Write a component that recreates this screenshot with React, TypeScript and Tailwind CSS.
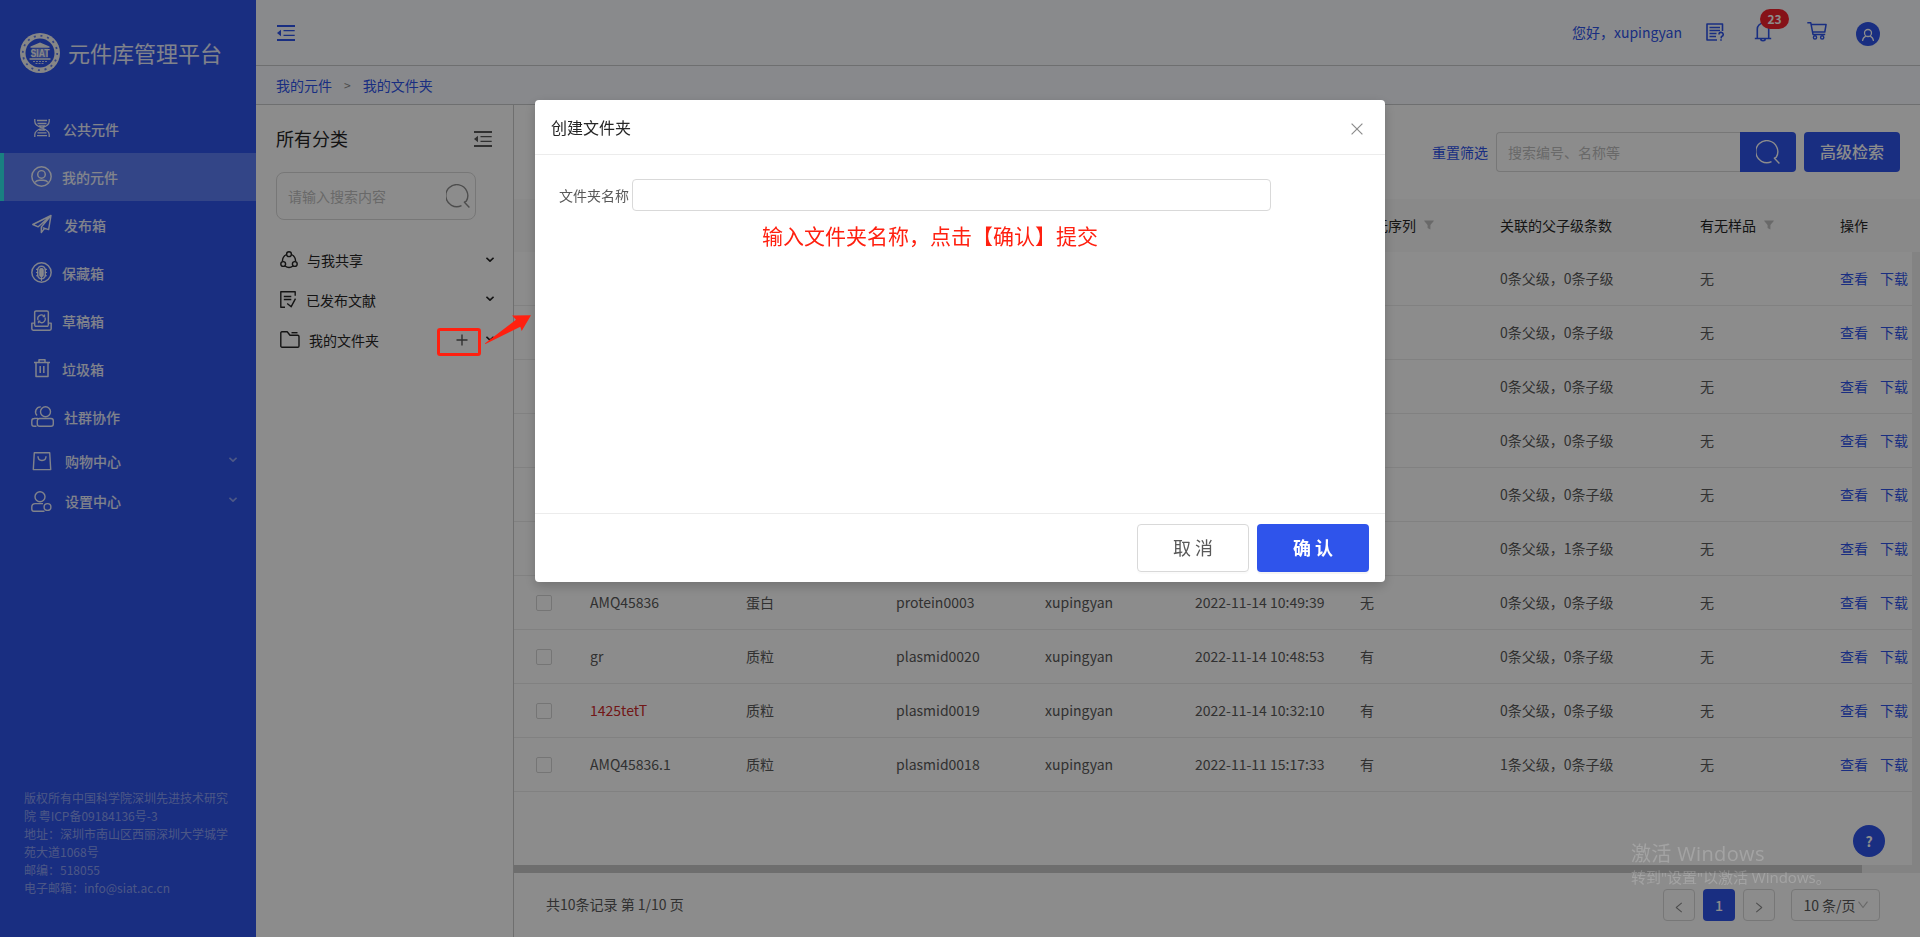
import React from "react";

type P = { children?: React.ReactNode; className?: string; box?: string };

function Svg({ children, className = "", box = "0 0 20 20" }: P) {
  return (
    <svg viewBox={box} className={"shrink-0 " + className} fill="none" stroke="currentColor" strokeWidth="1.4" strokeLinejoin="round">
      {children}
    </svg>
  );
}

const Outdent = () => (
  <Svg box="0 0 18 16" className="block h-4 w-[18px]">
    <path d="M0 1h18M0 15h18" strokeWidth="1.8" />
    <path d="M6.5 5.6h11.2M6.5 10.4h11.2" strokeWidth="1.3" />
    <path d="M0 8l4-3.2v6.4z" fill="currentColor" stroke="none" />
  </Svg>
);

const Search = () => (
  <Svg box="0 0 24 24" className="block size-6">
    <path d="M15.500 21.600A11 11 0 1 1 20.300 17.200L18.400 18.200l5 5.200" />
  </Svg>
);

const Chevron = ({ className = "" }: { className?: string }) => (
  <Svg box="0 0 8 6" className={"block h-[6px] w-2 " + className}>
    <path d="M.4 .8L4 4.2 7.6 .8" strokeWidth="1.7" />
  </Svg>
);

const Funnel = () => (
  <svg viewBox="0 0 10 10" className="ml-2 h-[10px] w-[10px] text-[#bfbfbf]" fill="currentColor">
    <path d="M.5 .5h9c.4 0 .5.3.3.6L6.4 5v4.5L3.6 8V5L.2 1.1C0 .8.1.5.5.5z" />
  </svg>
);

const icons: Record<string, React.ReactNode> = {
  dna: (
    <Svg box="0 0 16 18" className="h-[18px] w-4">
      <path d="M.8 0v2.500C.8 6 4 7.500 8 9s7.200 3 7.200 6.500V18M15.200 0v2.500C15.200 6 12 7.500 8 9S.8 12 .8 15.500V18M3 1.500h10M3.500 4.500h9M5 7h6M5 11h6M3.500 13.800h9M3 16.600h10" strokeWidth="1.300" />
    </Svg>
  ),
  user: (
    <Svg className="h-[21px] w-[21px]">
      <circle cx="10" cy="10" r="9.2" />
      <circle cx="10" cy="8" r="3.6" />
      <path d="M3.700 15.600c1.300-1.600 3-2.100 4.500-2.100h3.600c1.500 0 3.200.5 4.500 2.100" />
    </Svg>
  ),
  plane: (
    <Svg className="h-5 w-5">
      <path d="M19 1.500L.8 10.500l5.400 2.300L19 1.500zM19 1.500L16.600 15.600l-6-2M19 1.500L9.300 13v5.500l3.200-4.100" />
    </Svg>
  ),
  vault: (
    <Svg className="h-[21px] w-[21px]">
      <circle cx="10" cy="10" r="9.200" />
      <rect x="6.400" y="4" width="7.200" height="12" rx="3.600" />
      <rect x="8.500" y="6.300" width="3" height="7.400" rx="1" fill="currentColor" />
      <path d="M10 14v4M4.800 7h2M4.800 10h2M4.800 13h2M13.200 7h2M13.200 10h2M13.200 13h2" strokeWidth="1" />
    </Svg>
  ),
  draft: (
    <Svg className="h-[21px] w-[21px]">
      <path d="M3.500 15V2.200c0-.8.500-1.300 1.300-1.300h10.400c.8 0 1.300.5 1.300 1.300V15M3.500 12.500H.8v5.400c0 .7.500 1.300 1.300 1.300h15.800c.8 0 1.300-.6 1.300-1.300v-5.400h-2.700M3.500 15.500h13" />
      <path d="M6.700 9.600a3.500 3.500 0 0 1 5.400-4.100M13.300 7.200a3.500 3.500 0 0 1-5.400 4.100M12.900 4.200v2h-1.800M7.100 12.600v-2h1.800" strokeWidth="1.200" />
    </Svg>
  ),
  trash: (
    <Svg className="h-5 w-5">
      <path d="M2 4.500h16M4 4.500v14h12v-14M7 4V1.800h6V4M8.200 8v7M11.800 8v7" strokeWidth="1.500" />
    </Svg>
  ),
  group: (
    <Svg box="0 0 23 21" className="h-[21px] w-[23px]">
      <circle cx="14.500" cy="5.800" r="5" />
      <path d="M9.800 .9a5 5 0 0 0-3.800 8.500M4.500 12.500H3.300C1.800 12.500.8 13.500.8 15v3c0 1.200.8 2.200 2.200 2.200h2.500M3 12.400h4" />
      <rect x="6.300" y="12.500" width="16" height="7.700" rx="2.300" />
    </Svg>
  ),
  bag: (
    <Svg className="h-5 w-5">
      <path d="M2.300 1.800h15.400l1 16.800H1.300z M6 5.300c0 5.600 8 5.600 8 0" />
    </Svg>
  ),
  setting: (
    <Svg box="0 0 21 21" className="h-[21px] w-[21px]">
      <circle cx="9" cy="5.800" r="5" />
      <path d="M12 12.600H4.200C2 12.600.8 14 .8 16v2c0 1.300.8 2.200 2 2.200h10.700" />
      <circle cx="16.500" cy="16" r="3.400" />
    </Svg>
  ),
};

const menu = [
  { icon: "dna", label: "公共元件", pad: "pl-[11px]", h: "h-12" },
  { icon: "user", label: "我的元件", pad: "pl-[10px]", h: "h-12", active: true },
  { icon: "plane", label: "发布箱", pad: "pl-3", h: "h-12" },
  { icon: "vault", label: "保藏箱", pad: "pl-[10px]", h: "h-12" },
  { icon: "draft", label: "草稿箱", pad: "pl-[10px]", h: "h-12" },
  { icon: "trash", label: "垃圾箱", pad: "pl-[10px]", h: "h-12" },
  { icon: "group", label: "社群协作", pad: "pl-[10px]", h: "h-12" },
  { icon: "bag", label: "购物中心", pad: "pl-[13px]", h: "h-10", sub: true },
  { icon: "setting", label: "设置中心", pad: "pl-[13px]", h: "h-10", sub: true },
];

function Logo() {
  return (
    <svg viewBox="0 0 40 40" className="size-10 shrink-0">
      <circle cx="20" cy="20" r="20" fill="#f5f5f5" />
      <circle cx="20" cy="20" r="17.200" fill="none" stroke="#2f54eb" strokeWidth="1.800" strokeDasharray="2 4.750" opacity=".75" />
      <circle cx="20" cy="20" r="14.500" fill="#2f54eb" />
      <path d="M10.500 13.500L20 9.500l9.500 4v1.200h-19zM9.500 25.200h21v1.600h-21z" fill="#f5f5f5" />
      <path d="M12 15.500h16v9H12z" fill="#f5f5f5" opacity=".35" />
      <text x="20" y="24" textAnchor="middle" fontSize="10" fontWeight="900" textLength="19" lengthAdjust="spacingAndGlyphs" fill="#f5f5f5" fontFamily="Liberation Sans, sans-serif">SIAT</text>
      <path d="M13 28.500h14M15.500 30.500h9" stroke="#f5f5f5" strokeWidth=".8" strokeDasharray="2 1" />
    </svg>
  );
}

function Sidebar() {
  return (
    <aside className="flex w-64 shrink-0 flex-col bg-[#2f54eb] text-white/90">
      <div className="flex h-[105px] items-start gap-2 pl-5 pt-[33px]">
        <Logo />
        <span className="text-[22px] leading-[39px]">元件库管理平台</span>
      </div>
      <nav>
        {menu.map((m) => (
          <div key={m.label} className={`flex items-center text-sm font-medium ${m.h} ${m.active ? "border-l-4 border-[#2fe9ec] bg-[#5d7ef6] pl-[27px]" : "pl-[31px]"}`}>
            <span className={`flex ${m.icon === "group" ? "w-[23px]" : "w-[21px]"} justify-center ${m.icon === "dna" || m.icon === "plane" ? "-translate-y-px" : m.sub ? "" : "-translate-y-px"}`}>{icons[m.icon]}</span>
            <span className={m.pad}>{m.label}</span>
            {m.sub && <Chevron className="ml-auto mr-[19px] -translate-y-px opacity-50" />}
          </div>
        ))}
      </nav>
      <div className="mt-auto whitespace-nowrap pb-10 pl-6 text-xs leading-[18px] text-white/45">
        版权所有中国科学院深圳先进技术研究<br />院 粤ICP备09184136号-3<br />地址：深圳市南山区西丽深圳大学城学<br />苑大道1068号<br />邮编：518055<br />电子邮箱：info@siat.ac.cn
      </div>
    </aside>
  );
}

function Header() {
  return (
    <>
      <header className="flex h-[66px] items-start border-b border-[#c8cacc] bg-[#f9fcff] pl-[21px] pr-10 text-[#2f54eb]">
        <div className="pt-[25px]"><Outdent /></div>
        <span className="ml-auto pt-[21px] text-sm leading-[22px]">您好，xupingyan</span>
        <Svg box="0 0 18 18" className="ml-6 mt-[23px] size-[18px]">
          <path d="M11 17H1V1h15.500v7" strokeWidth="1.600" />
          <path d="M3.500 4.500h10.500M3.500 7.500h10.500M3.500 10.500h7M3.500 13.500h6.500" strokeWidth="1.400" />
          <path d="M13 11.500a2.100 2.100 0 1 1 2.500 2l-.4 1.800M15 16.300v1.500" strokeWidth="1.600" />
        </Svg>
        <div className="relative ml-[30px] mt-[22px]">
          <Svg box="0 0 18 20" className="block h-5 w-[18px]">
            <path d="M3.300 16.200V7a5.700 5.700 0 0 1 11.400 0v9.200M.8 16.500h16.400M6.800 17c0 2.300 4.400 2.300 4.400 0" strokeWidth="1.600" />
          </Svg>
          <span className="absolute -top-[13px] left-[6px] flex h-5 w-[29px] items-center justify-center rounded-full bg-[#f5222d] text-xs font-bold text-white">23</span>
        </div>
        <Svg box="0 0 20 18" className="ml-[35px] mt-[22px] h-[18px] w-5">
          <path d="M.3 .8h3.500l2.200 11.600h12.200M4.300 2.400h14.800l-1.300 7.600H5.500" strokeWidth="1.500" />
          <circle cx="8" cy="15.400" r="1.600" />
          <circle cx="15.200" cy="15.400" r="1.600" />
        </Svg>
        <div className="ml-[29px] mt-[22px] flex size-6 items-center justify-center rounded-full bg-[#2f54eb] text-white">
          <Svg box="0 0 14 14" className="mt-0.5 size-[14px]">
            <circle cx="7" cy="5" r="3.500" strokeWidth="1.300" />
            <path d="M1.500 13c.3-2.500 1.800-4.200 3.300-4.900M12.500 13c-.3-2.500-1.800-4.200-3.300-4.900" strokeWidth="1.200" />
          </Svg>
        </div>
      </header>
      <div className="flex h-[39px] items-center border-b border-[#c8cacc] bg-[#f8faff] pl-5 text-sm text-[#2f54eb]">
        我的元件<span className="mx-3 text-xs text-[#8c8c8c]">&gt;</span>我的文件夹
      </div>
    </>
  );
}

function Categories() {
  return (
    <section className="w-[258px] shrink-0 border-r border-[#cacaca] text-[#262626]">
      <div className="flex items-start pl-5 pr-[21px] pt-5">
        <h2 className="-mt-px text-lg leading-7">所有分类</h2>
        <div className="ml-auto pt-1.5 text-[#595959]"><Outdent /></div>
      </div>
      <div className="ml-5 mt-5 flex h-12 w-[200px] items-center rounded-lg border border-[#d9d9d9] pl-[11px] pr-[5px] text-sm text-[#bfbfbf]">
        请输入搜索内容
        <span className="ml-auto text-[#8c8c8c]"><Search /></span>
      </div>
      <div className="mt-5 pl-6 text-sm">
        <div className="flex h-10 items-center pr-[19px]">
          <Svg box="0 0 18 18" className="h-[18px] w-[18px]">
            <circle cx="9" cy="3.200" r="2.400" /><circle cx="3.200" cy="13" r="2.400" /><circle cx="14.800" cy="13" r="2.400" />
            <path d="M6.500 3.500C3.700 5 2.300 7.500 2.500 10.500M11.500 3.500c2.800 1.500 4.200 4 4 7M5 15c2.500 1.800 5.500 1.800 8 0" />
          </Svg>
          <span className="pl-[9px]">与我共享</span>
          <Chevron className="ml-auto" />
        </div>
        <div className="flex h-10 items-center pr-[19px]">
          <Svg box="0 0 17 17" className="h-[17px] w-[17px] -translate-y-px">
            <path d="M5 16.200H.8V.8h14.400v4M3.800 5.500h7.500M3.800 8.500h7.500M7.200 12.500l4 3.200 4.300-8" />
          </Svg>
          <span className="pl-[9px]">已发布文献</span>
          <Chevron className="ml-auto -translate-y-px" />
        </div>
        <div className="flex h-10 items-center pr-[19px]">
          <Svg box="0 0 20 17" className="h-[17px] w-5 -translate-y-px">
            <path d="M.8 2c0-.7.400-1.200 1.100-1.200h5.300l2.800 3.500h7.800c.7 0 1.200.4 1.200 1.100v9.600c0 .7-.5 1.200-1.200 1.200H2c-.7 0-1.200-.5-1.200-1.200z" />
            <path d="M11.500 1.700h6" />
          </Svg>
          <span className="pl-[9px]">我的文件夹</span>
          <Svg box="0 0 12 12" className="ml-auto mr-[18px] size-3 text-[#595959]">
            <path d="M6 .5v11M.5 6h11" />
          </Svg>
          <Chevron className="-translate-y-px" />
        </div>
      </div>
    </section>
  );
}

type Row = { name?: string; type?: string; code?: string; user?: string; time?: string; seq?: string; relation: string };
const none = "0条父级，0条子级";
const rows: Row[] = [
  { relation: none },
  { relation: none },
  { relation: none },
  { relation: none },
  { relation: none },
  { relation: "0条父级，1条子级" },
  { name: "AMQ45836", type: "蛋白", code: "protein0003", user: "xupingyan", time: "2022-11-14 10:49:39", seq: "无", relation: none },
  { name: "gr", type: "质粒", code: "plasmid0020", user: "xupingyan", time: "2022-11-14 10:48:53", seq: "有", relation: none },
  { name: "1425tetT", type: "质粒", code: "plasmid0019", user: "xupingyan", time: "2022-11-14 10:32:10", seq: "有", relation: none },
  { name: "AMQ45836.1", type: "质粒", code: "plasmid0018", user: "xupingyan", time: "2022-11-11 15:17:33", seq: "有", relation: "1条父级，0条子级" },
];

const cols = "grid grid-cols-[76px_156px_150px_149px_150px_165px_140px_200px_140px_1fr] items-center whitespace-nowrap pb-0.5 text-sm";
const check = "ml-[22px] size-4 translate-y-px rounded-[2px] border border-[#d6d6d6]";

function Table() {
  return (
    <>
      <div className={`${cols} h-[53px] shrink-0 bg-[#fafafa] text-[#262626]`}>
        <span className={check} />
        <span /><span /><span /><span /><span />
        <span className="flex items-center">有无序列<Funnel /></span>
        <span>关联的父子级条数</span>
        <span className="flex items-center">有无样品<Funnel /></span>
        <span>操作</span>
      </div>
      <div className="flex h-[613px] shrink-0">
        <div className="min-w-0 flex-1">
          {rows.map((r, i) => (
            <div key={i} className={`${cols} h-[54px] border-b border-[#ececec] text-[#595959]`}>
              <span className={check} />
              <span className={r.name === "1425tetT" ? "text-[#cf2a2a]" : ""}>{r.name}</span>
              <span>{r.type}</span>
              <span>{r.code}</span>
              <span>{r.user}</span>
              <span>{r.time}</span>
              <span>{r.seq}</span>
              <span>{r.relation}</span>
              <span>无</span>
              <span className="flex gap-3 text-[#2f54eb]"><a>查看</a><a>下载</a></span>
            </div>
          ))}
        </div>
        <div className="w-2 bg-[#efefef]" />
      </div>
      <div className="h-2 shrink-0 bg-[#efefef]"><div className="h-2 w-[1348px] bg-[#c9c9c9]" /></div>
    </>
  );
}

function Pager() {
  const b = "flex h-8 items-center justify-center rounded border border-[#d9d9d9]";
  return (
    <div className="flex items-center pl-8 pr-10 pt-4 text-sm text-[#595959]">
      <span className="-translate-y-px">共10条记录 第 1/10 页</span>
      <span className={`${b} ml-auto w-8 text-[#8c8c8c]`}>
        <Svg box="0 0 8 12" className="h-[11px] w-[8px] translate-y-0.5"><path d="M7 1L1 6l6 5" strokeWidth="1.100" /></Svg>
      </span>
      <span className="ml-2 flex size-8 items-center justify-center rounded bg-[#2f54eb] font-medium text-white">1</span>
      <span className={`${b} ml-2 w-8 text-[#8c8c8c]`}>
        <Svg box="0 0 8 12" className="h-[11px] w-[8px] translate-y-0.5"><path d="M1 1l6 5-6 5" strokeWidth="1.100" /></Svg>
      </span>
      <span className={`${b} ml-4 w-[89px] gap-[2px]`}>
        10 条/页
        <Svg box="0 0 10 8" className="h-2 w-[10px] text-[#bfbfbf]"><path d="M.5 .7L5 6.500 9.500 .7" strokeWidth="1.200" /></Svg>
      </span>
    </div>
  );
}

function Modal() {
  return (
    <div className="fixed inset-0 flex items-start justify-center bg-black/45 pt-[100px]">
      <div className="relative flex h-[482px] w-[850px] flex-col rounded bg-white shadow-[0_4px_12px_rgba(0,0,0,0.2)]">
        <div className="flex h-[55px] shrink-0 items-center border-b border-[#ececec] pl-4 pr-[22px] text-base text-[#262626]">
          创建文件夹
          <Svg box="0 0 12 12" className="ml-auto mt-1 size-3 text-[#8c8c8c]"><path d="M.6 .6l10.800 10.800M11.400 .6L.6 11.400" strokeWidth="1.200" /></Svg>
        </div>
        <div className="flex-1 pl-6 pt-6">
          <div className="flex items-center">
            <label className="w-[73px] text-sm text-[#595959]">文件夹名称</label>
            <input className="h-8 w-[639px] rounded border border-[#d9d9d9] bg-white" />
          </div>
          <p className="pl-[203px] pt-2 text-[21px] leading-8 text-[#ff2010]">输入文件夹名称，点击【确认】提交</p>
        </div>
        <div className="flex h-[69px] shrink-0 items-start justify-end gap-2 border-t border-[#ececec] pr-4 pt-[10px] text-lg">
          <button className="h-12 w-28 rounded border border-[#d9d9d9] pb-0.5 text-[#595959] shadow-[0_2px_0_rgba(0,0,0,0.015)]">取 消</button>
          <button className="h-12 w-28 rounded bg-[#2f54eb] pb-0.5 font-bold text-white shadow-[0_2px_0_rgba(0,0,0,0.045)]">确 认</button>
        </div>
      </div>
    </div>
  );
}

export default function App() {
  return (
    <div className="relative flex h-[937px] w-full overflow-hidden bg-white font-['Noto_Sans_CJK_SC',sans-serif]">
      <Sidebar />
      <div className="flex min-w-0 flex-1 flex-col">
        <Header />
        <div className="flex min-h-0 flex-1">
          <Categories />
          <main className="flex min-w-0 flex-1 flex-col">
            <div className="flex h-[94px] shrink-0 items-start justify-end pr-5 pt-[27px]">
              <span className="mr-2 text-sm leading-10 text-[#2f54eb]">重置筛选</span>
              <div className="flex h-10 w-[244px] items-center rounded-l border border-r-0 border-[#d9d9d9] pl-[11px] text-sm text-[#bfbfbf]">搜索编号、名称等</div>
              <div className="flex h-10 w-14 items-center justify-center rounded-r bg-[#2f54eb] text-white"><Search /></div>
              <div className="ml-2 flex h-10 w-24 items-center justify-center rounded bg-[#2f54eb] pb-0.5 text-base font-medium text-white">高级检索</div>
            </div>
            <Table />
            <Pager />
          </main>
        </div>
      </div>
      <div className="absolute left-[1853px] top-[825px] flex size-8 items-center justify-center rounded-full bg-[#2f54eb] text-sm font-bold text-white">?</div>
      <Modal />
      <div className="absolute left-[437px] top-[328px] h-7 w-11 rounded-[3px] border-[3px] border-[#ff2010]" />
      <svg viewBox="0 0 50 34" className="absolute left-[483px] top-[312px] h-[34px] w-[50px]">
        <path d="M1.800 31.500L33 7.700 29 3.500 48 3.200 38.700 19 37.300 14.800 2.500 32z" fill="#ff2010" />
      </svg>
      <div className="absolute left-[1631px] top-[840px] whitespace-nowrap font-['Open_Sans','Noto_Sans_CJK_SC',sans-serif] text-white/20">
        <div className="text-xl leading-7 tracking-[0.35px]">激活 Windows</div>
        <div className="-mt-0.5 text-[15px] leading-[22px]">转到"设置"以激活 Windows。</div>
      </div>
    </div>
  );
}
